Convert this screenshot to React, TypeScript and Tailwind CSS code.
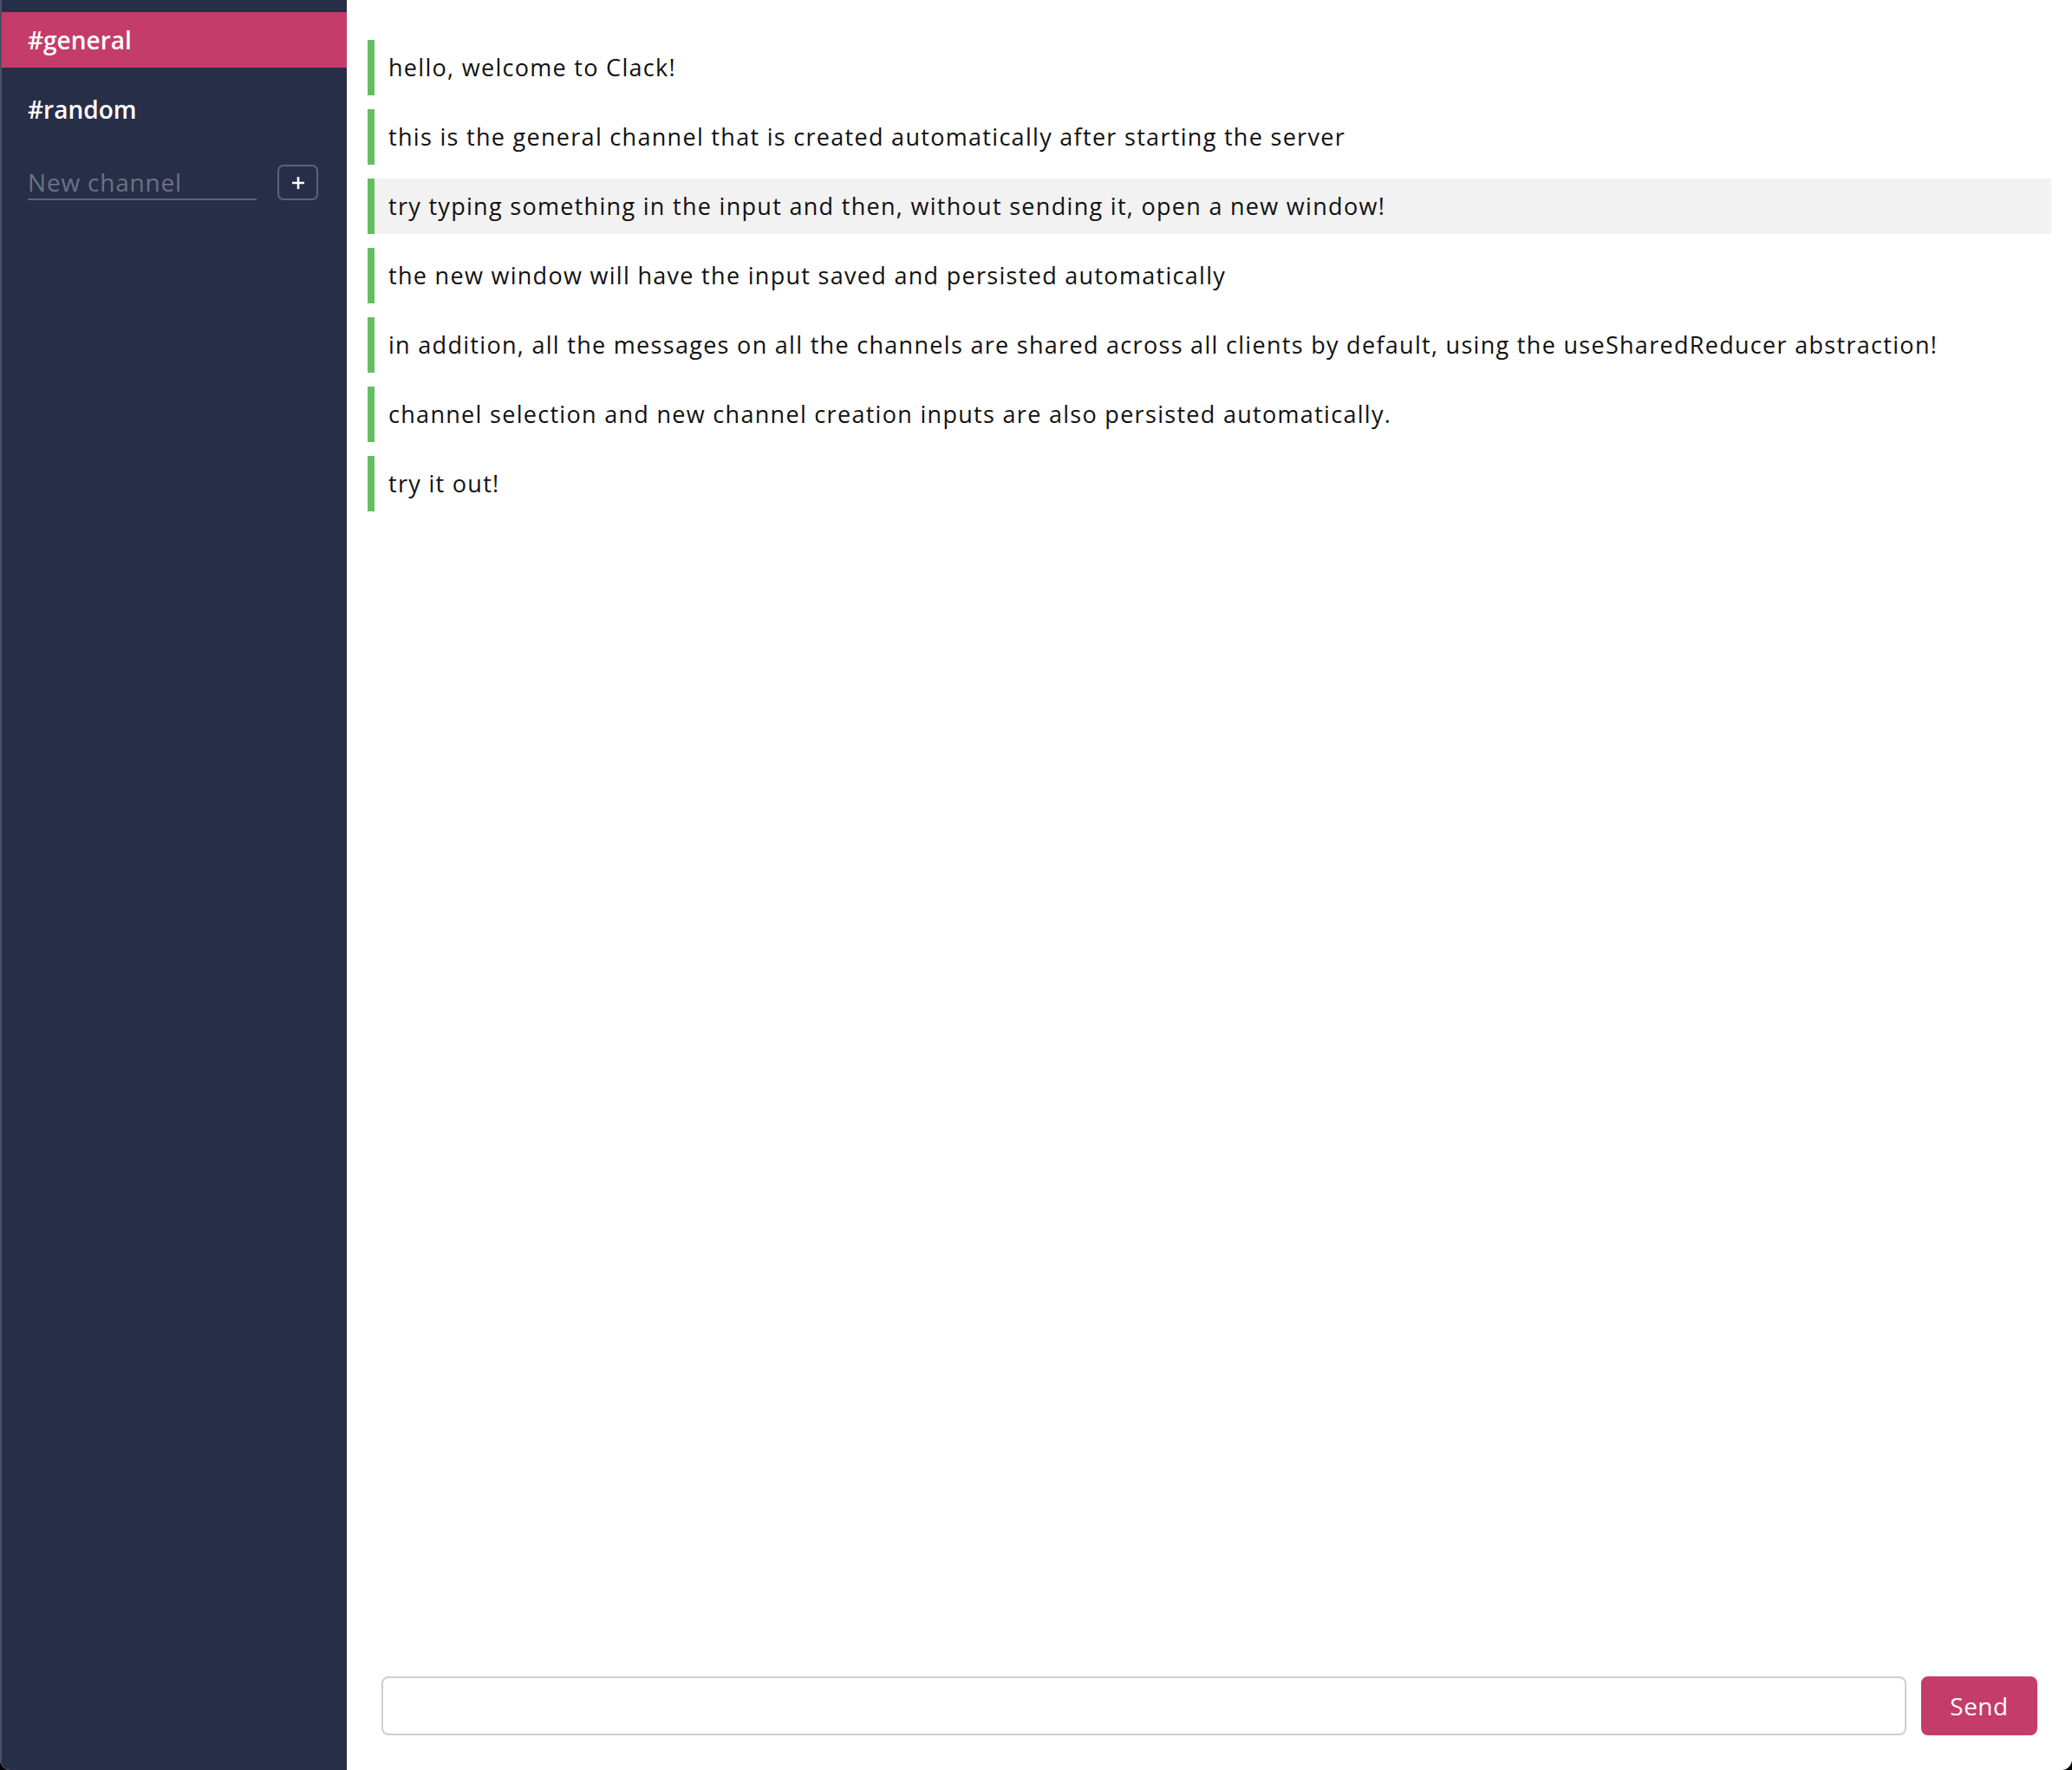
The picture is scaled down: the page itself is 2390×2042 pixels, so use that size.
const messages = [
  "hello, welcome to Clack!",
  "this is the general channel that is created automatically after starting the server",
  "try typing something in the input and then, without sending it, open a new window!",
  "the new window will have the input saved and persisted automatically",
  "in addition, all the messages on all the channels are shared across all clients by default, using the useSharedReducer abstraction!",
  "channel selection and new channel creation inputs are also persisted automatically.",
  "try it out!",
];

function Sidebar() {
  return (
    <aside className="flex w-[400px] shrink-0 flex-col border-l-2 border-[#4a5069] bg-[#272e47] pt-[14px]">
      <div className="flex h-[64px] items-center bg-[#c43c69] px-[30px] text-[28px] font-semibold text-white">
        #general
      </div>
      <div className="mt-[16px] flex h-[64px] items-center px-[30px] text-[28px] font-semibold text-white">
        #random
      </div>
      <div className="mt-[32px] flex items-center gap-[24px] px-[30px]">
        <input
          type="text"
          placeholder="New channel"
          className="h-[40px] w-[264px] border-b-2 border-[#5d6479] bg-transparent text-[28px] tracking-[0.8px] text-white outline-none placeholder:text-[#6b7286]"
        />
        <button
          type="button"
          aria-label="Add channel"
          className="flex h-[41px] w-[47px] items-center justify-center rounded-[7px] border-2 border-[#5d6479] text-white"
        >
          <svg width="16" height="16" viewBox="0 0 16 16" fill="none" stroke="currentColor" strokeWidth="2.6" aria-hidden>
            <path d="M8 1v14M1 8h14" />
          </svg>
        </button>
      </div>
    </aside>
  );
}

export default function App() {
  return (
    <div className="h-[2042px] w-[2390px] bg-black" style={{ fontFamily: '"Open Sans", "Liberation Sans", sans-serif' }}>
      <div className="flex h-full overflow-hidden rounded-b-[12px] bg-white">
        <Sidebar />
        <main className="flex min-w-0 flex-1 flex-col">
          <div className="flex flex-1 flex-col gap-[16px] px-[24px] pt-[46px]">
            {messages.map((m, i) => (
              <div
                key={i}
                className={`flex h-[64px] items-center border-l-[8px] border-[#66be63] pl-[16px] text-[27px] tracking-[1.3px] text-[#111] ${
                  i === 2 ? "bg-[#f2f2f2]" : ""
                }`}
              >
                {m}
              </div>
            ))}
          </div>
          <div className="flex gap-[17px] px-[40px] pb-[40px]">
            <input
              type="text"
              className="h-[68px] flex-1 rounded-[8px] border-2 border-[#cfcfcf] px-[16px] text-[28px] outline-none"
            />
            <button
              type="button"
              className="h-[68px] w-[134px] rounded-[8px] bg-[#c43c69] text-[28px] font-medium tracking-[0.5px] text-white"
            >
              Send
            </button>
          </div>
        </main>
      </div>
    </div>
  );
}
